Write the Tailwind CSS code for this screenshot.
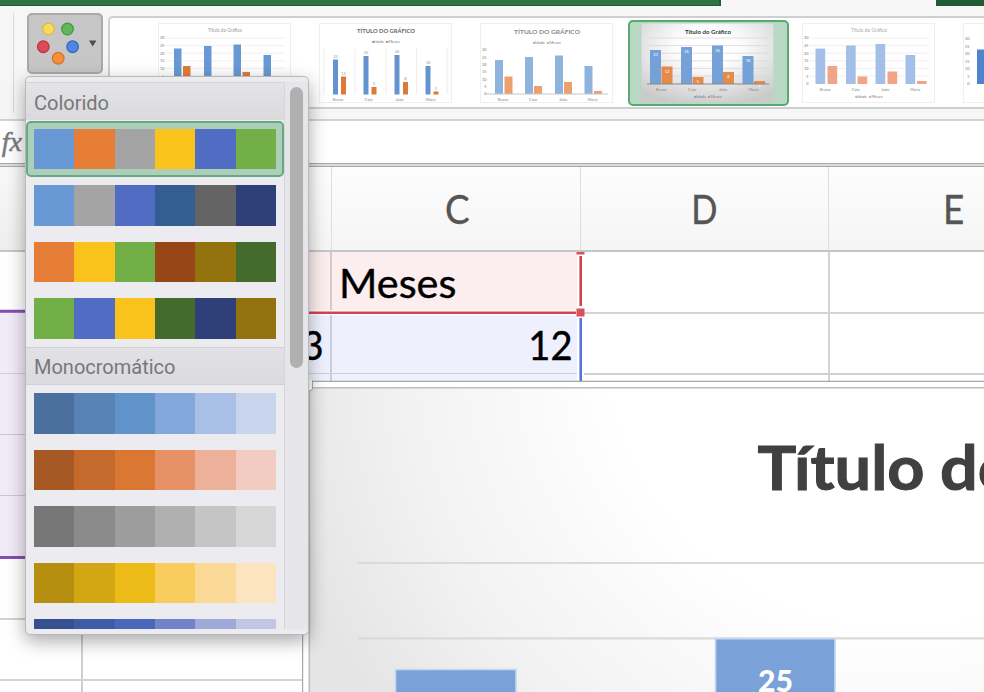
<!DOCTYPE html>
<html lang="pt">
<head>
<meta charset="utf-8">
<title>Planilha</title>
<script src="https://cdn.jsdelivr.net/npm/@tailwindcss/browser@4"></script>
</head>
<body class="bg-white overflow-hidden">
<div class="relative w-[984px] h-[692px] overflow-hidden flex flex-col bg-white font-['Lato',sans-serif]">

  <!-- window title strip -->
  <div class="h-[6px] flex shrink-0 bg-[#f7f7f7]">
    <div class="w-[720.5px] bg-[#2c7645] border-b border-r-2 border-[#1f5b34]"></div>
    <div class="w-[215.5px]"></div>
    <div class="flex-1 bg-[#1f5b34]"></div>
  </div>

  <!-- ribbon -->
  <div class="h-[115px] shrink-0 flex bg-[#f6f6f7] border-b-2 border-[#d2d2d2]">
    <div class="w-[14px] mt-[7px] h-[100px] border-r border-[#d9d9da]"></div>
    <div class="ml-[13px] mt-[7px] w-[76px] h-[61px] rounded-[5px] border-2 border-[#a9a9a9] bg-[#c6c6c6]">
      <svg width="72" height="57" viewBox="29 15 72 57">
        <g stroke-width="1.3">
          <circle cx="48.5" cy="29" r="5.8" fill="#f8da5c" stroke="#dcba3c"/>
          <circle cx="67.5" cy="29" r="5.8" fill="#62b657" stroke="#409a3d"/>
          <circle cx="43.3" cy="46.7" r="5.8" fill="#db4b57" stroke="#bd3341"/>
          <circle cx="72.6" cy="46.7" r="5.8" fill="#4f86e2" stroke="#3468c4"/>
          <circle cx="58.2" cy="58.2" r="5.8" fill="#f58f3c" stroke="#d9742a"/>
        </g>
        <path d="M89 40.500h7.4l-3.7 6z" fill="#4d4d4d"/>
      </svg>
    </div>
    <div id="gallery" class="ml-[5px] mt-[10px] h-[93px] flex-1 flex overflow-hidden rounded-l-[5px] border-2 border-r-0 border-[#cfcfcf] bg-white pl-[34.5px] pt-[2px]"></div>
  </div>

  <!-- formula bar -->
  <div class="h-[42px] shrink-0 bg-white">
    <div class="w-6 h-[40px] pr-[2px] text-[28px] leading-[41px] italic text-[#7b7b7b] font-['Liberation_Serif',serif] flex justify-end [-webkit-text-stroke:0.5px_#7b7b7b]">fx</div>
  </div>
  <div class="h-[4px] shrink-0 bg-[#dcdcdc] border-t border-b border-[#a9a9a9]"></div>

  <!-- column headers -->
  <div class="h-[85px] shrink-0 flex bg-gradient-to-b from-[#fdfdfd] to-[#f5f5f5] border-b-2 border-[#c6c6c6] text-[#555] text-[40px] leading-[85px] text-center [-webkit-text-stroke:0.4px_#555]">
    <div class="w-[83px] shrink-0 bg-gradient-to-b from-[#f8f8f8] to-[#eeeeee]"></div>
    <div class="w-[249px] shrink-0 border-r border-[#dedede]"></div>
    <div class="w-[249px] shrink-0 border-r border-[#dedede]"><span class="inline-block scale-x-[0.92] pl-[3px]">C</span></div>
    <div class="w-[248px] shrink-0 border-r border-[#dedede]"><span class="inline-block scale-x-[0.86]">D</span></div>
    <div class="w-[249px] shrink-0"><span class="inline-block scale-x-[0.92]">E</span></div>
  </div>

  <!-- sheet rows -->
  <div class="relative flex-1 overflow-hidden">
    <div class="flex h-[60px] border-b-2 border-[#d4d4d4] text-[41px] leading-[62px] text-black box-content -mb-px [-webkit-text-stroke:0.4px_#000]">
      <div class="w-[83px] border-r border-[#c8c8c8]"></div>
      <div class="w-[249px] bg-[#fceeee] border-r-2 border-[#d3c9c9]"></div>
      <div class="w-[249px] bg-[#fceeee] pl-[7px]"><span class="inline-block origin-left scale-x-[1.01]">Meses</span></div>
      <div class="w-[249px] border-r-2 border-[#d4d4d4]"></div>
    </div>
    <div class="flex h-[60px] border-b-2 border-[#d0d0d4] text-[41px] leading-[64px] text-black box-content -mb-px [-webkit-text-stroke:0.4px_#000]">
      <div class="w-[83px] bg-[#f1ebf8] border-r border-[#c8c8c8]"></div>
      <div class="w-[249px] bg-[#eef1fd] border-r-2 border-[#c9ccd9] text-right pr-[6px]"><span class="inline-block origin-right scale-x-[0.93]">13</span></div>
      <div class="w-[249px] bg-[#eef1fd] text-right pr-[8px]"><span class="inline-block origin-right scale-x-[0.93]">12</span></div>
      <div class="w-[249px] border-r-2 border-[#d4d4d4]"></div>
    </div>
    <div class="flex h-[60px] border-b-2 border-[#c9c9cf] box-content -mb-px">
      <div class="w-[83px] bg-[#f1ebf8]"></div>
      <div class="w-[249px] bg-[#eef1fd] border-r-2 border-[#c9ccd9]"></div>
      <div class="w-[249px] bg-[#eef1fd]"></div>
      <div class="w-[249px] border-r-2 border-[#d4d4d4]"></div>
    </div>
    <div class="flex h-[60px] border-b-2 border-[#c9c9cf] box-content -mb-px"><div class="w-[83px] bg-[#f1ebf8]"></div></div>
    <div class="flex h-[60px] border-b-2 border-[#c9c9cf] box-content"><div class="w-[83px] bg-[#f1ebf8]"></div></div>
    <div class="flex h-[60px] border-b-2 border-[#d2d2d2] box-content -mb-px"><div class="w-[83px] border-r border-[#c8c8c8]"></div></div>
    <div class="flex h-[60px] border-b-2 border-[#d2d2d2] box-content -mb-px"><div class="w-[83px] border-r-2 border-[#cfcfcf]"></div></div>
    <div class="flex h-[60px]"><div class="w-[83px] border-r-2 border-[#cfcfcf]"></div></div>

    <!-- range highlight outlines -->
    <svg class="absolute left-0 top-0" width="984" height="440" viewBox="0 252 984 440">
      <path d="M0 311.3H82M0 557.6H82" stroke="#8350b0" stroke-width="3" fill="none"/>
      <path d="M83 312.7H580" stroke="#fff" stroke-width="5"/>
      <path d="M577 252h7v129h-7z" fill="#fff"/>
      <path d="M83 312.7H576M580.7 256V306" stroke="#d4434d" stroke-width="2.6" fill="none"/>
      <path d="M576.5 252h8v2.6h-8zM576.5 308.5h8v8h-8z" fill="#d9505a"/>
      <path d="M580.7 318V381" stroke="#5a74d6" stroke-width="2.6"/>
    </svg>
  </div>

  <!-- embedded chart object -->
  <svg class="absolute left-[302px] top-[380px] font-['Lato',sans-serif]" width="682" height="312" viewBox="302 380 682 312">
    <defs>
      <radialGradient id="plot" gradientUnits="userSpaceOnUse" cx="900" cy="330" r="640">
        <stop offset="0.46" stop-color="#fff"/><stop offset="0.58" stop-color="#fafafa"/>
        <stop offset="0.78" stop-color="#f2f2f2"/><stop offset="1" stop-color="#e5e5e5"/>
      </radialGradient>
    </defs>
    <path d="M302.5 692V381.4H984" fill="#fff" stroke="#a8a8a8" stroke-width="1.4"/>
    <path d="M309.3 700V387.8H990V700z" fill="url(#plot)" stroke="#bdbdbd" stroke-width="1.6"/>
    <rect x="300" y="378.5" width="12.5" height="12" rx="2" fill="#fff" stroke="#a8a8a8"/>
    <path d="M357 563H984M357 638.4H984" stroke="#dadada" stroke-width="2.2"/>
    <rect x="395.5" y="669.5" width="120.5" height="30" fill="#7aa2d8" stroke="#c3d8f1" stroke-width="1.6"/>
    <rect x="715.5" y="638.7" width="119.5" height="60" fill="#7aa2d8" stroke="#c3d8f1" stroke-width="1.6"/>
    <text x="757.5" y="490" font-size="61" font-weight="700" fill="#404040" stroke="#404040" stroke-width="1" textLength="167" lengthAdjust="spacingAndGlyphs">Título</text>
    <text x="940" y="490" font-size="61" font-weight="700" fill="#404040" stroke="#404040" stroke-width="1" textLength="76" lengthAdjust="spacingAndGlyphs">do</text>
    <text x="758" y="691.5" font-size="31" font-weight="900" fill="#fff" textLength="35" lengthAdjust="spacingAndGlyphs">25</text>
  </svg>

  <!-- colour palette menu -->
  <div class="absolute left-[25px] top-[76px] w-[284px] h-[559px] rounded-[5px] border border-[#b9b9bc] bg-[#ececf0] pt-[5px] pb-[5px] flex shadow-[0_6px_18px_rgba(0,0,0,0.34)] font-['Roboto',sans-serif] text-[20px] text-[#77777a]">
    <div class="w-[259px] border-r border-t border-[#d6d6da] overflow-hidden flex flex-col">
      <div class="h-[37px] shrink-0 bg-gradient-to-b from-[#e4e4e7] to-[#dadadd] pl-[8px] leading-[40px]">Colorido</div>
      <div id="colorful" class="pt-[1px] h-[227px] shrink-0 flex flex-col"></div>
      <div class="h-[38px] shrink-0 bg-gradient-to-b from-[#e2e2e6] to-[#dadadf] border-y border-[#d0d0d5] pl-[8px] leading-[38px]">Monocromático</div>
      <div id="mono" class="flex flex-col"></div>
    </div>
    <div class="flex-1 bg-[#e6e6ea] pl-[5px] pt-[5px]"><div class="w-[13px] h-[281px] rounded-full bg-[#b0b0b1]"></div></div>
  </div>
</div>

<script>
const colorful = [
  ['#6899d4','#e67e38','#a4a4a4','#f9c31b','#506dc3','#72af46'],
  ['#6899d4','#a4a4a4','#506dc3','#325e92','#646464','#2f4079'],
  ['#e67e38','#f9c31b','#72af46','#974717','#93730d','#446b2b'],
  ['#72af46','#506dc3','#f9c31b','#446b2b','#2f4079','#93730d']];
const mono = [
  ['#4a6f9d','#5883b5','#6193cb','#83a7da','#a9bfe5','#c8d5ec'],
  ['#a65924','#c36a2c','#da7733','#e79168','#edb19b','#f2ccc0'],
  ['#777777','#8b8b8b','#9d9d9d','#b0b0b0','#c5c5c5','#d7d7d7'],
  ['#b78f10','#d3a713','#ecbb18','#f9cc5e','#fad895','#fbe4bf'],
  ['#364f8e','#405ba6','#4a68ba','#7184ca','#a0a8d8','#c1c6e4']];
const strip = c => `<div class="flex h-[40.5px] w-[242px]">${c.map(x => `<div class="flex-1" style="background:${x}"></div>`).join('')}</div>`;
document.getElementById('colorful').innerHTML = colorful.map((c, i) =>
  i === 0 ? `<div class="h-[56px] shrink-0 w-[258px] rounded-[5px] border-2 border-[#67a982] bg-[#adcfba] pl-[6px] pt-[5.5px]">${strip(c)}</div>`
          : `<div class="h-[56.6px] shrink-0 pl-[8px] pt-[8px]">${strip(c)}</div>`).join('');
document.getElementById('mono').innerHTML = mono.map(c => `<div class="h-[56.5px] shrink-0 pl-[8px] pt-[8px]">${strip(c)}</div>`).join('');

/* gallery thumbnails: bars are [x, top] pairs, blue and orange alternating */
const thumbs = [
  {base:61,w:7.5,b:'#6899d4',o:'#e07b3a',title:'Título do Gráfico',ty:9,tc:'#999',tw:34,ticks:[15,61],grid:1,cats:66,leg:73,
   bars:[[16,25.5],[25,43],[46,23],[55,54],[75.5,21.5],[84.5,49],[105.5,32],[115,58]]},
  {base:71.5,w:5,b:'#6494d0',o:'#dd7a3a',title:'TÍTULO DO GRÁFICO',ty:9.5,tc:'#666',tw:58,bold:1,cols:1,cats:77,leg:20,vals:'#999',
   bars:[[14,36.5],[22,53.5],[44.5,33],[52.5,64],[75.5,32],[84,59],[106.5,43],[114.5,68.5]]},
  {base:71,w:8,b:'#8fb3df',o:'#eda06d',title:'TÍTULO DO GRÁFICO',ty:10.5,tc:'#8a8a8a',tw:66,bold:1,ticks:[27,71],cats:77,leg:21,axis:'#c5c5c5',
   bars:[[15,37],[24.5,53.5],[45,34],[54,63],[75,32.5],[84,59],[104.5,43],[114,68]]},
  {base:61,w:11,b:'#74a2d8',o:'#e68a4a',title:'Título do Gráfico',ty:10.5,tc:'#333',tw:46,bold:1,grid:1,cats:67,leg:75,axis:'#888',sel:1,vals:'#fff',
   bars:[[9,27],[20.5,43.5],[40,24],[51.5,54],[71,22.5],[82,49],[101.5,33],[113,58]]},
  {base:61,w:9.7,b:'#a3bfe7',o:'#f2a586',title:'Título do Gráfico',ty:9,tc:'#aaa',tw:36,ticks:[15,61],grid:1,cats:67,leg:74.5,
   bars:[[13.5,25.6],[25.5,43],[44,22.5],[55.5,53.5],[73.5,21],[85.5,48.5],[103.5,32],[115,58]]},
  {base:61,w:11,b:'#4f83cc',o:'#e07b3a',ticks:[16,61],bars:[[14,26.5]]}];
const names = ['Bruno','Caio','João','Maria'], nums = [23,12,25,5,26,8,18,2];
document.getElementById('gallery').innerHTML = thumbs.map(t => {
  let s = `<rect x=".5" y=".5" width="132" height="79" fill="${t.sel ? 'url(#tg)' : '#fff'}" stroke="${t.sel ? 'none' : '#efefef'}"/>`;
  if (t.grid) for (let y = 15; y < 60; y += 7.6) s += `<path d="M8 ${y}H127" stroke="${t.sel ? '#d8d8d8' : '#ececec'}" stroke-width=".8"/>`;
  if (t.cols) for (const x of [5,36,67,97.5,128]) s += `<path d="M${x} 26V71" stroke="#ededed"/>`;
  if (t.ticks) for (let i = 0; i < 7; i++) s += `<text x="6.5" y="${t.ticks[0] + i * (t.ticks[1] - t.ticks[0]) / 6 + 1.3}" font-size="3.8" text-anchor="end" fill="#777">${30 - i * 5}</text>`;
  t.bars.forEach(([x, y], i) => {
    s += `<rect x="${x}" y="${y}" width="${t.w}" height="${t.base - y}" fill="${i % 2 ? t.o : t.b}"/>`;
    if (t.vals) s += `<text x="${x + t.w / 2}" y="${t.sel ? y + 6 : y - 2}" font-size="4" text-anchor="middle" fill="${t.vals}">${nums[i]}</text>`;
    if (t.cats && i % 2 === 0) s += `<text x="${x + t.w}" y="${t.cats + .5}" font-size="4" text-anchor="middle" fill="#888">${names[i / 2]}</text>`;
  });
  if (t.axis) s += `<path d="M6 ${t.base}H128" stroke="${t.axis}"/>`;
  if (t.title) s += `<text x="67" y="${t.ty}" font-size="6.2" text-anchor="middle" font-weight="${t.bold ? 700 : 400}" fill="${t.tc}" textLength="${t.tw}" lengthAdjust="spacingAndGlyphs">${t.title}</text>`;
  if (t.leg) s += `<text x="65" y="${t.leg}" font-size="4" text-anchor="end" fill="#777"><tspan fill="${t.b}">■</tspan>Idade</text><text x="67" y="${t.leg}" font-size="4" fill="#777"><tspan fill="${t.o}">■</tspan>Meses</text>`;
  const defs = t.sel ? '<defs><radialGradient id="tg" cx=".5" cy=".3" r=".75"><stop offset=".3" stop-color="#fff"/><stop offset="1" stop-color="#cacaca"/></radialGradient></defs>' : '';
  return `<div class="w-[161px] h-[86px] shrink-0 rounded-[5px] flex justify-center ${t.sel ? 'border-2 border-[#59a871] bg-[#b9d8c3] pt-[1px] pr-[1px]' : 'pt-[3px] pr-[1px]'}"><svg class="shrink-0" width="134" height="80" viewBox="0 0 134 80">${defs}${s}</svg></div>`;
}).join('');
</script>
</body>
</html>
